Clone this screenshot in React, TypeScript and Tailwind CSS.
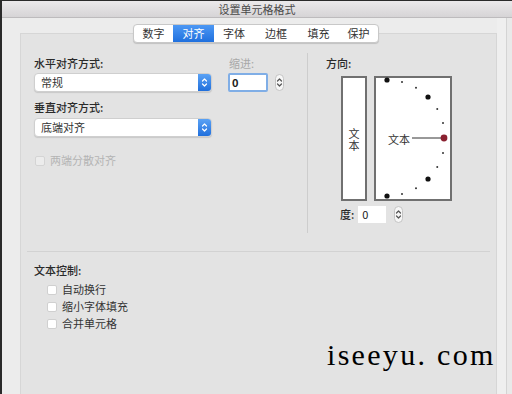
import React from 'react';

const CJK = '"Noto Sans CJK SC", "Noto Sans", sans-serif';

const TABS = [
  { label: '数字', w: 'w-[39px]' },
  { label: '对齐', w: 'w-[41px]', active: true },
  { label: '字体', w: 'w-[40px]' },
  { label: '边框', w: 'w-[44px]' },
  { label: '填充', w: 'w-[41px]' },
  { label: '保护', w: 'w-[39px]' },
];

function Chevrons({ color }: { color: string }) {
  return (
    <svg width="7" height="11" viewBox="0 0 7 11" fill="none" stroke={color} strokeWidth="1.2" strokeLinecap="round" strokeLinejoin="round">
      <path d="M1.5 4 L3.5 2 L5.5 4" />
      <path d="M1.5 7 L3.5 9 L5.5 7" />
    </svg>
  );
}

function Select({ value }: { value: string }) {
  return (
    <div className="flex h-[19px] w-[178px] items-stretch rounded-[4px] border border-[#cfcfcf] bg-white shadow-[0_1px_1px_rgba(0,0,0,0.12)]">
      <span className="flex-1 pl-[6px] text-[11px] leading-[17px] text-[#333]">{value}</span>
      <span className="flex w-[13px] items-center justify-center rounded-r-[3px] bg-gradient-to-b from-[#5aa2f5] to-[#1f6fdc]">
        <Chevrons color="#ffffff" />
      </span>
    </div>
  );
}

function Stepper() {
  return (
    <div className="flex h-[17px] w-[9px] items-center justify-center rounded-full border border-[#c4c4c4] bg-[#f7f7f7]">
      <Chevrons color="#555" />
    </div>
  );
}

function Check({ label, disabled }: { label: string; disabled?: boolean }) {
  return (
    <div className="flex h-[17px] items-center gap-[5px]">
      <span
        className={
          disabled
            ? 'h-[10px] w-[10px] rounded-[2px] border border-[#d4d4d4] bg-[#ececec]'
            : 'h-[10px] w-[10px] rounded-[2px] border border-[#d0d0d0] bg-white'
        }
      />
      <span className={disabled ? 'text-[11px] text-[#b4b4b4]' : 'text-[11px] text-[#333]'}>{label}</span>
    </div>
  );
}

function ArcBox() {
  const cx = 13;
  const cy = 62;
  const r = 58;
  const angles = [90, 75, 60, 45, 30, 15, -15, -30, -45, -60, -75, -90];
  return (
    <div className="relative h-[125px] w-[78px] border-2 border-[#707070] bg-white">
      <svg className="absolute left-[-2px] top-[-2px]" width="78" height="125" viewBox="0 0 78 125">
        {angles.map((a) => {
          const rad = (a * Math.PI) / 180;
          const big = a % 45 === 0;
          return (
            <circle
              key={a}
              cx={cx + r * Math.cos(rad)}
              cy={cy - r * Math.sin(rad)}
              r={big ? 2.6 : 1}
              fill={big ? '#111' : '#333'}
            />
          );
        })}
        <line x1="38" y1="62" x2="70" y2="62" stroke="#333" strokeWidth="1" />
        <circle cx="70" cy="62" r="3.4" fill="#8a2030" />
      </svg>
      <span className="absolute left-[12px] top-[54px] text-[11px] leading-[14px] text-[#333]">文本</span>
    </div>
  );
}

export default function App() {
  return (
    <div
      className="relative flex h-[394px] w-[512px] flex-col overflow-hidden border-l-2 border-t border-[#2a2a2a] bg-[#ececec]"
      style={{ fontFamily: CJK }}
    >
      <div className="flex h-[17px] items-center justify-center border-b border-[#bdbbbd] bg-gradient-to-b from-[#ebe9eb] to-[#d6d4d6] text-[11px] text-[#4a4a4a]">
        设置单元格格式
      </div>

      <div className="flex flex-1">
        <div className="flex flex-col pl-[18px]">
          <div className="relative z-10 ml-[113px] mt-[6px] flex h-[19px] w-fit overflow-hidden rounded-[4px] border border-[#c8c8c8] bg-white shadow-[0_1px_1px_rgba(0,0,0,0.15)]">
            {TABS.map((t) => (
              <span
                key={t.label}
                className={
                  t.active
                    ? `${t.w} flex items-center justify-center bg-gradient-to-b from-[#4c98f4] to-[#1f70de] text-[11px] text-white`
                    : `${t.w} flex items-center justify-center text-[11px] text-[#333]`
                }
              >
                {t.label}
              </span>
            ))}
          </div>

          <div className="-mt-[10px] flex w-[477px] flex-1 flex-col border border-b-0 border-[#d6d6d6] bg-[#e3e3e3]">
            <div className="flex h-[217px] pl-[13px] pt-[22px]">
              <div className="flex w-[273px] flex-col">
                <div className="flex gap-[16px]">
                  <div className="flex flex-col">
                    <span className="h-[14px] text-[11px] font-medium leading-[14px] text-[#2a2a2a]">水平对齐方式:</span>
                    <div className="mt-[3px]">
                      <Select value="常规" />
                    </div>
                  </div>
                  <div className="flex flex-col">
                    <span className="h-[14px] pl-[1px] text-[11px] leading-[14px] text-[#a8a8a8]">缩进:</span>
                    <div className="mt-[3px] flex items-center gap-[7px]">
                      <div className="h-[19px] w-[40px] rounded-[2px] border-2 border-[#80aee6] bg-white pl-[2px] text-[11px] font-bold leading-[15px] text-[#222]">
                        0
                      </div>
                      <Stepper />
                    </div>
                  </div>
                </div>
                <span className="mt-[8px] h-[14px] text-[11px] font-medium leading-[14px] text-[#2a2a2a]">垂直对齐方式:</span>
                <div className="mt-[4px]">
                  <Select value="底端对齐" />
                </div>
                <div className="ml-[1px] mt-[15px]">
                  <Check label="两端分散对齐" disabled />
                </div>
              </div>

              <div className="mt-[-3px] h-[180px] w-px bg-[#cdcdcd]" />

              <div className="flex flex-col pl-[18px]">
                <span className="h-[14px] text-[11px] font-medium leading-[14px] text-[#2a2a2a]">方向:</span>
                <div className="ml-[15px] mt-[6px] flex gap-[7px]">
                  <div className="flex h-[125px] w-[26px] items-center justify-center border-2 border-[#707070] bg-white">
                    <span className="w-[11px] text-[11px] leading-[12px] text-[#333]">文本</span>
                  </div>
                  <ArcBox />
                </div>
                <div className="ml-[14px] mt-[5px] flex items-center">
                  <span className="text-[11px] font-medium text-[#2a2a2a]">度:</span>
                  <div className="ml-[4px] h-[17px] w-[28px] bg-white pl-[4px] text-[11px] leading-[17px] text-[#222]">0</div>
                  <div className="ml-[8px]">
                    <Stepper />
                  </div>
                </div>
              </div>
            </div>

            <div className="mx-[6px] h-px bg-[#d2d2d2]" />

            <div className="flex flex-col pl-[13px] pt-[11px]">
              <span className="text-[11px] font-medium leading-[14px] text-[#2a2a2a]">文本控制:</span>
              <div className="ml-[13px] mt-[4px] flex flex-col">
                <Check label="自动换行" />
                <Check label="缩小字体填充" />
                <Check label="合并单元格" />
              </div>
            </div>
          </div>
        </div>
        <div className="w-[9px] bg-[#efefef]" />
        <div className="w-px bg-[#d4d4d4]" />
        <div className="flex-1 bg-[#e9e9e9]" />
      </div>

      <span
        className="absolute left-[325px] top-[336px] text-[30px] leading-[36px] tracking-[2.3px] text-black"
        style={{ fontFamily: '"Liberation Serif", serif' }}
      >
        iseeyu. com
      </span>
    </div>
  );
}
